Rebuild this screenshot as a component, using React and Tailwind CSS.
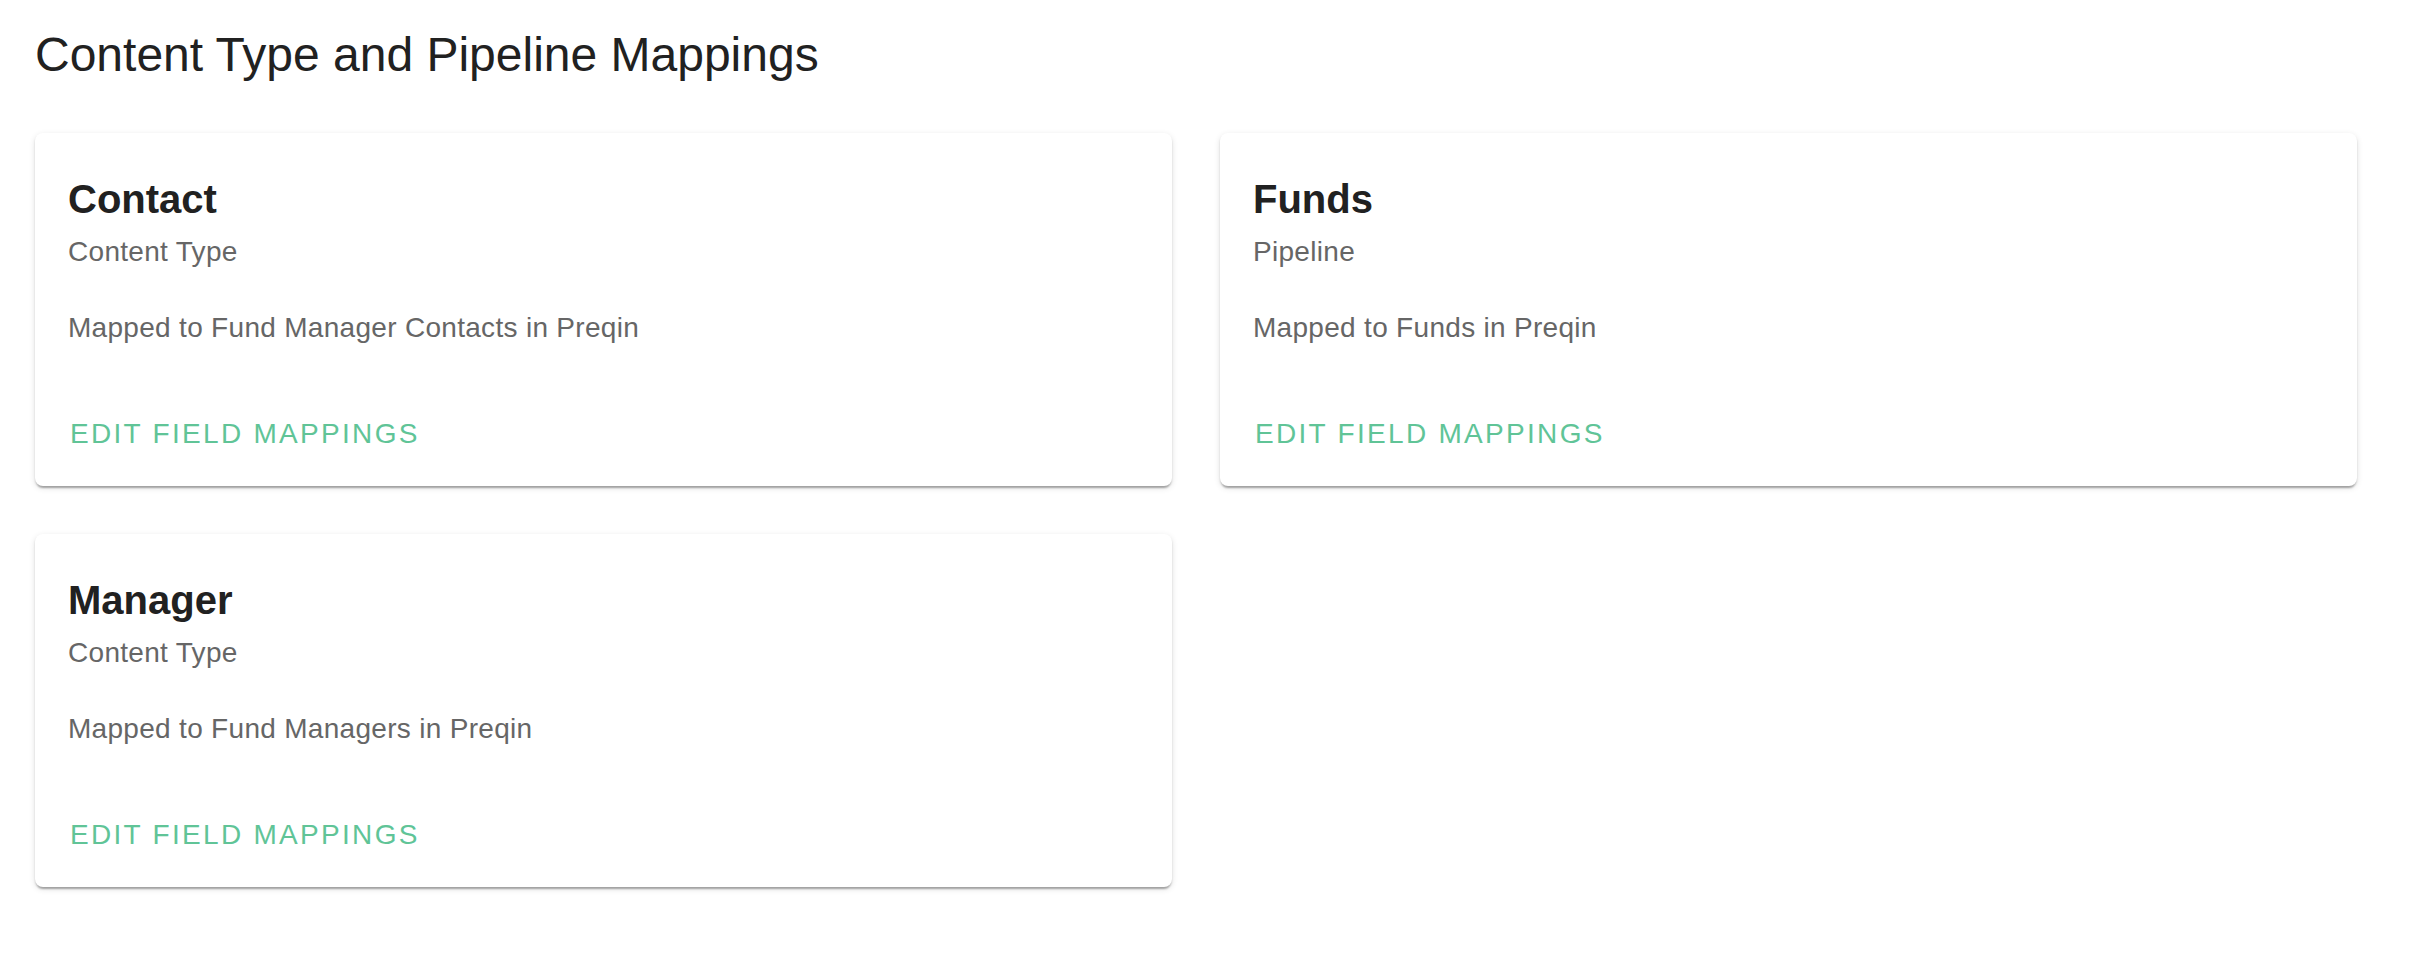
import React from "react";

const mappings = [
    { name: "Contact", kind: "Content Type", target: "Fund Manager Contacts" },
    { name: "Funds", kind: "Pipeline", target: "Funds" },
    { name: "Manager", kind: "Content Type", target: "Fund Managers" },
];

const MappingCard = ({ item }) => {
    return (
        <div className="bg-white rounded-[8px] shadow-[0_4px_2px_-2px_rgba(0,0,0,0.2),0_2px_2px_0_rgba(0,0,0,0.14),0_2px_6px_0_rgba(0,0,0,0.12)] pt-[42px] pb-[32px]">

            <div className="px-[33px]">
                <h3 className="text-[40px] leading-[48px] font-bold text-[#212121]">
                    {item.name}
                </h3>

                <p className="mt-[9px] text-[28px] leading-[40px] text-[#666666] tracking-[0.3px]">
                    {item.kind}
                </p>

                <p className="mt-[36px] text-[28px] leading-[40px] text-[#666666] tracking-[0.3px]">
                    Mapped to {item.target} in Preqin
                </p>
            </div>

            <div className="mt-[66px] px-[35px]">
                <button className="text-[28px] leading-[40px] uppercase tracking-[2.3px] text-[#60c497]">
                    Edit Field Mappings
                </button>
            </div>

        </div>
    );
};

const App = () => {
    return (
        <div className="min-h-screen bg-white font-['Liberation_Sans',Arial,sans-serif] pl-[35px] pt-[27px]">

            <h2 className="text-[48px] leading-[56px] text-[#212121]">
                Content Type and Pipeline Mappings
            </h2>

            <div className="mt-[50px] grid grid-cols-[1137px_1137px] gap-[48px]">
                {mappings.map((m) => (
                    <MappingCard key={m.name} item={m} />
                ))}
            </div>

        </div>
    );
};

export default App;
